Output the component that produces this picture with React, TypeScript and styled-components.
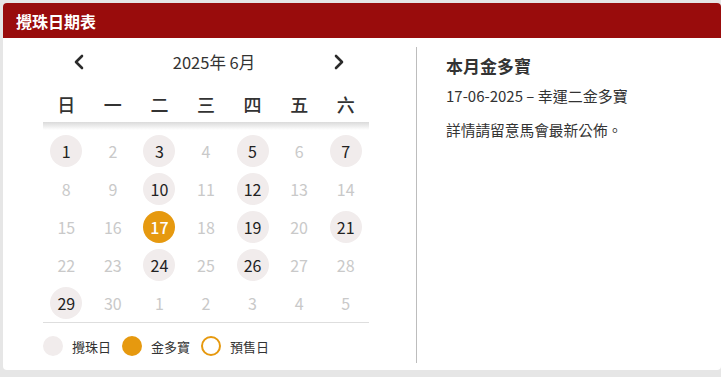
import styled, {createGlobalStyle} from "styled-components";

const GlobalStyle = createGlobalStyle`
  html, body {
    margin: 0;
    padding: 0;
    background: #e6e6e6;
    font-family: "Noto Sans CJK TC", "Noto Sans", sans-serif;
  }
`;

type DayKind = "draw" | "jackpot" | "plain" | "muted";

const weekdays = ["日", "一", "二", "三", "四", "五", "六"];

const drawDays = [1, 3, 5, 7, 10, 12, 19, 21, 24, 26, 29];
const jackpotDays = [17];

const buildDays = () => {
  const days: {label: number; kind: DayKind}[] = [];
  for (let d = 1; d <= 30; d++) {
    let kind: DayKind = "plain";
    if (jackpotDays.includes(d)) kind = "jackpot";
    else if (drawDays.includes(d)) kind = "draw";
    days.push({label: d, kind});
  }
  for (let d = 1; d <= 5; d++) days.push({label: d, kind: "muted"});
  return days;
};

function Chevron({dir}: {dir: "left" | "right"}) {
  return (
    <svg width="12" height="16" viewBox="0 0 12 16">
      <polyline
        points={dir === "left" ? "9,2 3,8 9,14" : "3,2 9,8 3,14"}
        fill="none"
        stroke="#2b2b2b"
        strokeWidth="2.6"
        strokeLinecap="round"
        strokeLinejoin="round"
      />
    </svg>
  );
}

function App() {
  const days = buildDays();

  return (
    <Page>
      <GlobalStyle />
      <Card>
        <Header>攪珠日期表</Header>
        <Body>
          <Calendar>
            <NavRow>
              <NavButton>
                <Chevron dir="left" />
              </NavButton>
              <MonthTitle>2025年 6月</MonthTitle>
              <NavButton>
                <Chevron dir="right" />
              </NavButton>
            </NavRow>
            <WeekRow>
              {weekdays.map((w) => (
                <WeekDay key={w}>{w}</WeekDay>
              ))}
            </WeekRow>
            <Shade />
            <DayGrid>
              {days.map((d, i) => (
                <DayCell key={i}>
                  <DayDot $kind={d.kind}>{d.label}</DayDot>
                </DayCell>
              ))}
            </DayGrid>
            <Legend>
              <LegendItem>
                <LegendMark $kind="draw" />
                攪珠日
              </LegendItem>
              <LegendItem>
                <LegendMark $kind="jackpot" />
                金多寶
              </LegendItem>
              <LegendItem>
                <LegendMark $kind="presale" />
                預售日
              </LegendItem>
            </Legend>
          </Calendar>
          <InfoPanel>
            <InfoTitle>本月金多寶</InfoTitle>
            <InfoLine>17-06-2025 – 幸運二金多寶</InfoLine>
            <InfoNote>詳情請留意馬會最新公佈。</InfoNote>
          </InfoPanel>
        </Body>
      </Card>
    </Page>
  );
}

export default App;

const Page = styled.div`
  width: 721px;
  height: 377px;
  padding: 3px 0 0 3px;
  box-sizing: border-box;
  overflow: hidden;
`;

const Card = styled.div`
  height: 367px;
  background: #fff;
  border-radius: 4px;
  overflow: hidden;
  display: flex;
  flex-direction: column;
`;

const Header = styled.div`
  height: 35px;
  flex-shrink: 0;
  background: #990c0c;
  color: #fff;
  font-size: 16px;
  font-weight: 700;
  display: flex;
  align-items: center;
  padding-left: 13px;
`;

const Body = styled.div`
  flex: 1;
  display: flex;
  padding: 9px 0 7px 40px;
`;

const Calendar = styled.div`
  width: 326px;
  margin-right: 47px;
  margin-top: -9px;
  padding-top: 9px;
  display: flex;
  flex-direction: column;
`;

const NavRow = styled.div`
  height: 30px;
  display: flex;
  align-items: center;
  justify-content: space-between;
  padding: 0 24px 0 30px;
`;

const NavButton = styled.div`
  width: 12px;
  height: 16px;
  display: flex;
`;

const MonthTitle = styled.div`
  font-size: 16.5px;
  color: #333;
  margin-left: 10px;
`;

const WeekRow = styled.div`
  display: grid;
  grid-template-columns: repeat(7, 1fr);
  height: 34px;
  margin-top: 10px;
  align-items: center;
`;

const WeekDay = styled.div`
  text-align: center;
  font-size: 18px;
  font-weight: 500;
  color: #333;
`;

const Shade = styled.div`
  height: 8px;
  margin-top: 1px;
  background: linear-gradient(#dadada, #fff);
`;

const DayGrid = styled.div`
  display: grid;
  grid-template-columns: repeat(7, 1fr);
  grid-auto-rows: 38px;
  padding-top: 2px;
  border-bottom: 1px solid #dedede;
`;

const DayCell = styled.div`
  display: flex;
  align-items: center;
  justify-content: center;
`;

const DayDot = styled.div<{$kind: DayKind}>`
  width: 32px;
  height: 32px;
  border-radius: 50%;
  display: flex;
  align-items: center;
  justify-content: center;
  font-size: 16px;
  background: ${(p) =>
    p.$kind === "draw" ? "#f1ecec" : p.$kind === "jackpot" ? "#e6990f" : "transparent"};
  color: ${(p) =>
    p.$kind === "draw" ? "#222" : p.$kind === "jackpot" ? "#fff" : "#c9c9c9"};
  font-weight: ${(p) => (p.$kind === "jackpot" ? 500 : 400)};
`;

const Legend = styled.div`
  display: flex;
  align-items: center;
  padding-top: 13px;
  gap: 11px;
`;

const LegendItem = styled.div`
  display: flex;
  align-items: center;
  gap: 9px;
  font-size: 13px;
  color: #333;
`;

const LegendMark = styled.span<{$kind: "draw" | "jackpot" | "presale"}>`
  width: 20px;
  height: 20px;
  border-radius: 50%;
  box-sizing: border-box;
  background: ${(p) =>
    p.$kind === "draw" ? "#f1ecec" : p.$kind === "jackpot" ? "#e6990f" : "#fff"};
  border: ${(p) => (p.$kind === "presale" ? "2px solid #e6990f" : "none")};
`;

const InfoPanel = styled.div`
  flex: 1;
  border-left: 1px solid #bdbdbd;
  padding: 7px 0 0 29px;
  color: #333;
`;

const InfoTitle = styled.div`
  font-size: 17px;
  font-weight: 700;
  line-height: 24px;
`;

const InfoLine = styled.div`
  font-size: 15px;
  line-height: 20px;
  margin-top: 8px;
`;

const InfoNote = styled.div`
  font-size: 14.7px;
  line-height: 20px;
  margin-top: 14px;
`;
